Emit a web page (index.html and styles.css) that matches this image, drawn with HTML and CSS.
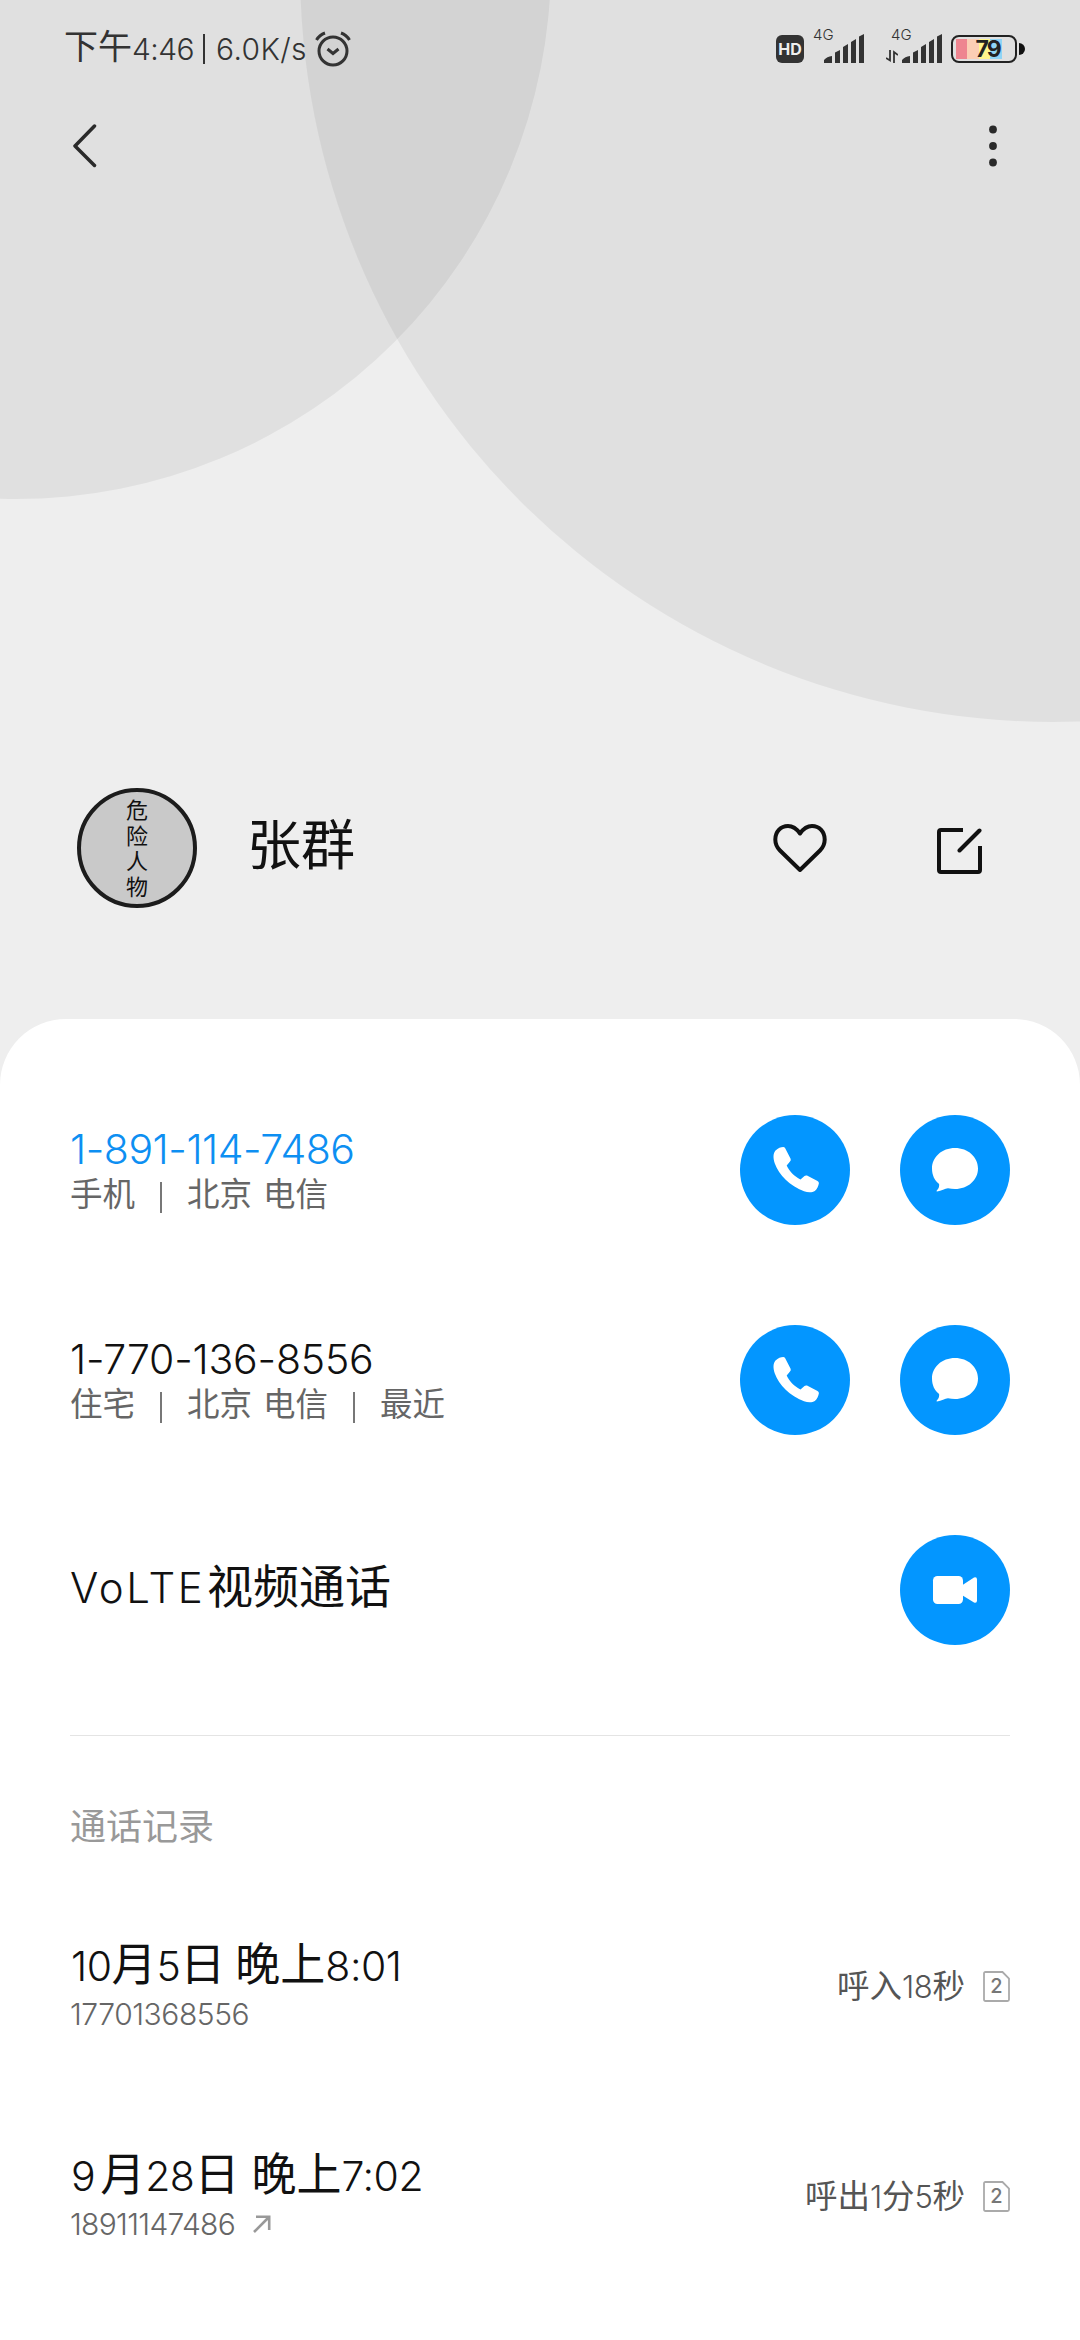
FILE: index.html
```html
<!DOCTYPE html>
<html lang="zh-CN">
<head>
<meta charset="utf-8">
<title>张群</title>
<link rel="stylesheet" href="styles.css">
</head>
<body>
<svg class="defs" width="0" height="0">
  <symbol id="phone" viewBox="0 0 110 110"><path fill="#fff" d="M35.500 35.500C38 33 41 32 43.200 32Q44.500 32 45.200 33.300L50.600 43.800Q51.300 45.300 50 46.500L46.700 50.500C49 56 54.500 61.500 60.500 64.500L64.500 61Q65.600 60 67 60.600L77.500 66Q79 66.900 78.900 68.200C78.500 71 77 74 74.800 76C72.500 77.600 68 77.700 64 76.300C50 71 39 60 34.800 48.500C33 43 33 38.500 35.500 35.500Z"/></symbol>
  <symbol id="bubble" viewBox="0 0 110 110"><path fill="#fff" d="M55 33C68 33 78 42 78 53.500C78 65 68 74 55 74Q51.500 74 48 73.200C45 73.500 41.500 76 37 76.500C36.300 76.500 36.400 76 37 75.300C39 73 39.300 71.500 39.100 69C34.500 65.500 32 60 32 53.500C32 42 42 33 55 33Z"/></symbol>
  <symbol id="sim" viewBox="0 0 27 31"><path fill="none" stroke="#aaa" stroke-width="1.800" d="M2.500 1H19.500L26 7.500V28.500Q26 30 24.500 30H2.500Q1 30 1 28.500V2.500Q1 1 2.500 1Z"/></symbol>
  <symbol id="bars" viewBox="0 0 40 29"><path fill="#333" d="M0 29V26Q3 22.500 8 22V29ZM11 29V18.500L16 16V29ZM19 29V13L24 10V29ZM27 29V8L32 5V29ZM35 29V2.500L40 0V29Z"/></symbol>
</svg>

<header class="hero">
  <svg class="backdrop" viewBox="0 0 1080 1100" width="1080" height="1100">
    <g fill="#000" fill-opacity=".055"><circle cx="16" cy="-36" r="535"/><circle cx="1053" cy="-31" r="753"/></g>
  </svg>
  <div class="status">
    <span class="clock"><span class="ampm">下午</span><span class="time">4:46</span></span>
    <span class="sep"></span>
    <span class="speed">6.0K/s</span>
    <svg class="alarm" width="36" height="36" viewBox="0 0 36 36" fill="none" stroke="#333" stroke-width="3"><circle cx="18" cy="20" r="14"/><path d="M1.500 9Q4.500 4 10 2M34.500 9Q31.500 4 26 2M12.500 18L18 22.500L23.500 18"/></svg>
    <span class="grow"></span>
    <span class="hd">HD</span>
    <span class="signal first"><span class="net">4G</span><svg width="40" height="29"><use href="#bars"/></svg></span>
    <span class="signal"><span class="net">4G</span><svg class="data" width="12" height="13" viewBox="0 0 12 13"><path fill="none" stroke="#333" stroke-width="1.800" d="M4 0V10.500L0 8M8 13V2L12 5"/></svg><svg width="40" height="29"><use href="#bars"/></svg></span>
    <span class="battery"><span class="level">79</span></span><span class="tip"></span>
  </div>
  <nav class="toolbar">
    <svg width="24" height="44" viewBox="0 0 24 44" fill="none" stroke="#2a2a2a" stroke-width="3.500" stroke-linecap="round" stroke-linejoin="round"><path d="M21.500 2L2 22L21.500 41.500"/></svg>
    <svg width="8" height="42" viewBox="0 0 8 42" fill="#2a2a2a"><circle cx="4" cy="4.500" r="3.900"/><circle cx="4" cy="21" r="3.900"/><circle cx="4" cy="37.500" r="3.900"/></svg>
  </nav>
  <div class="profile">
    <div class="avatar">危险人物</div>
    <h1 class="name">张群</h1>
    <svg class="heart" width="54" height="48" viewBox="0 0 54 48" fill="none" stroke="#111" stroke-width="4" stroke-linejoin="round"><path d="M27 9.500C23.500 4.500 19.500 2 15 2C7.500 2 2.300 8 2.300 15.500C2.300 20 4 23.500 7 26.500L27 46L47 26.500C50 23.500 51.700 20 51.700 15.500C51.700 8 46.500 2 39 2C34.500 2 30.500 4.500 27 9.500Z"/></svg>
    <svg class="edit" width="46" height="46" viewBox="0 0 46 46" fill="none" stroke="#111" stroke-width="4"><path d="M26 2H4Q2 2 2 4V42Q2 44 4 44H41Q43 44 43 42V18"/><path stroke-linecap="round" d="M22.500 22.500L42.500 2.500"/></svg>
  </div>
</header>

<main class="card">
  <section class="row">
    <div class="info">
      <div class="number blue n1">1-891-114-7486</div>
      <div class="meta"><span>手机</span><i></i><span>北京</span><span class="isp">电信</span></div>
    </div>
    <div class="actions"><svg class="btn"><use href="#phone"/></svg><svg class="btn"><use href="#bubble"/></svg></div>
  </section>
  <section class="row">
    <div class="info">
      <div class="number n2">1-770-136-8556</div>
      <div class="meta"><span>住宅</span><i></i><span>北京</span><span class="isp">电信</span><i></i><span>最近</span></div>
    </div>
    <div class="actions"><svg class="btn"><use href="#phone"/></svg><svg class="btn"><use href="#bubble"/></svg></div>
  </section>
  <section class="row">
    <div class="volte"><span class="latin">VoLTE</span><span>视频通话</span></div>
    <div class="actions"><svg class="btn" viewBox="0 0 110 110"><rect x="33" y="41" width="30" height="28" rx="4.500" fill="#fff"/><path fill="#fff" d="M61 51L74 42.500Q77 41.500 77 44.500V65.500Q77 68.500 74 67.500L61 59.500Z"/></svg></div>
  </section>
  <hr class="rule">
  <h2 class="heading">通话记录</h2>
  <section class="row log">
    <div class="info">
      <div class="when w1">10<b class="yue">月</b>5<b>日</b><b class="wan">晚上</b>8:01</div>
      <div class="sub s1">17701368556</div>
    </div>
    <div class="duration"><span>呼入<em>18</em>秒</span><div class="sim"><svg width="27" height="31"><use href="#sim"/></svg><span>2</span></div></div>
  </section>
  <section class="row log">
    <div class="info">
      <div class="when w2">9<b class="yue">月</b>28<b>日</b><b class="wan">晚上</b>7:02</div>
      <div class="sub s2">18911147486<svg class="out" width="18" height="18" viewBox="0 0 18 18" fill="none" stroke="#999" stroke-width="2.600"><path d="M1 17L15.500 2.500M3 1.800H16.200V15"/></svg></div>
    </div>
    <div class="duration"><span>呼出<em>1</em>分<em>5</em>秒</span><div class="sim"><svg width="27" height="31"><use href="#sim"/></svg><span>2</span></div></div>
  </section>
</main>
</body>
</html>
```
FILE: styles.css
```css
* { box-sizing: border-box; }
body {
  margin: 0;
  width: 1080px;
  height: 2340px;
  overflow: hidden;
  background: #eee;
  color: #111;
  font-family: Inter, "Noto Sans CJK SC", sans-serif;
  font-weight: 300;
}
svg { display: block; flex: none; }
.defs { position: absolute; }
h1, h2 { margin: 0; font-weight: inherit; }
b { font-weight: 400; }
em { font-style: normal; font-weight: 300; }

.hero { position: relative; height: 1019px; }
.backdrop { position: absolute; inset: 0; z-index: -1; }

.status {
  display: flex;
  align-items: center;
  height: 98px;
  padding: 0 55px 0 64px;
  color: #333;
  font-size: 30px;
  white-space: nowrap;
}
.clock { display: flex; align-items: center; width: 136px; letter-spacing: -.6px; }
.ampm { margin-top: -4px; font-size: 34px; font-weight: 400; line-height: 50px; letter-spacing: 0; }
.sep { width: 2px; height: 30px; margin: 0 11px 0 3px; background: #333; }
.speed { width: 91px; letter-spacing: .4px; }
.alarm { margin-left: 8px; }
.grow { flex: 1; }
.hd {
  width: 28px;
  height: 28px;
  margin-right: 9px;
  margin-top: -1px;
  border-radius: 6px;
  background: #333;
  color: #eee;
  font-size: 16px;
  font-weight: 700;
  line-height: 28px;
  text-align: center;
}
.signal {
  position: relative;
  display: flex;
  align-items: flex-end;
  justify-content: flex-end;
  width: 57px;
  height: 44px;
  margin-top: -17px;
  padding-top: 15px;
}
.signal.first { width: 51px; margin-right: 21px; }
.signal .data { margin-right: 4px; }
.net { position: absolute; left: 0; top: 6px; font-size: 15px; line-height: 20px; }
.signal:not(.first) .net { left: 6px; }
.battery {
  width: 66px;
  height: 28px;
  margin-left: 9px;
  margin-top: -1px;
  padding: 2px;
  border: 2px solid #222;
  border-radius: 8px;
}
.level {
  display: block;
  width: 46px;
  height: 20px;
  margin-left: 1px;
  padding-right: 2px;
  background: linear-gradient(90deg, #ee8590 0 11px, #fbceb5 11px 23px, #fff58c 23px 34px, #8fd4f5 34px);
  color: #222;
  font-size: 23px;
  font-weight: 700;
  line-height: 20px;
  text-align: right;
  letter-spacing: -1.800px;
}
.tip { width: 6px; height: 12px; margin-left: 2px; border-radius: 0 6px 6px 0; background: #111; }

.toolbar {
  display: flex;
  align-items: center;
  justify-content: space-between;
  height: 96px;
  padding: 0 83px 0 73px;
}
.profile {
  display: flex;
  align-items: center;
  height: 120px;
  margin-top: 594px;
  padding: 0 97px 0 77px;
}
.avatar {
  display: flex;
  align-items: center;
  justify-content: center;
  width: 120px;
  height: 120px;
  padding-top: 3px;
  border: 4px solid #1c1c1c;
  border-radius: 50%;
  background: #c9c9c9;
  font-family: "Noto Sans CJK SC", sans-serif;
  font-weight: 400;
  font-size: 22px;
  letter-spacing: 3.400px;
  line-height: 24px;
  writing-mode: vertical-rl;
}
.name { flex: 1; margin: -4px 0 0 50px; font-size: 54px; font-weight: 400; line-height: 60px; }
.heart { margin-right: 110px; }
.edit { margin-top: 5px; }

.card {
  height: 1321px;
  padding: 96px 70px 0;
  border-radius: 66px 66px 0 0;
  background: #fff;
}
.row { display: flex; justify-content: space-between; height: 110px; margin-bottom: 100px; }
.number { height: 55px; padding-top: 7px; font-size: 41px; line-height: 54px; white-space: nowrap; }
.blue { color: #0d8ff2; }
.n1 { letter-spacing: -.450px; }
.n2 { letter-spacing: -.200px; }
.meta { display: flex; align-items: center; height: 50px; color: #666; font-size: 32.500px; font-weight: 400; line-height: 50px; }
.meta i { width: 2px; height: 31px; margin: 4px 25px 0; background: #777; }
.isp { margin-left: 11px; }
.actions { display: flex; gap: 50px; }
.btn { width: 110px; height: 110px; border-radius: 50%; background: #0396ff; }
.volte { display: flex; align-items: center; height: 102px; font-size: 46px; font-weight: 400; line-height: 60px; white-space: nowrap; }
.volte span { margin-top: 0; }
.volte .latin { width: 137px; margin-top: 3px; font-size: 42px; font-weight: 300; letter-spacing: 2.600px; }
.rule { height: 1px; margin: -10px 0 1px; border: 0; background: #e4e4e4; }
.heading { height: 36px; margin-top: 73px; color: #999; font-size: 36px; font-weight: 400; line-height: 36px; }
.log { margin: 82px 0 0; height: 128px; }
.when { height: 70px; padding-left: 1px; padding-top: 3px; font-size: 41px; line-height: 70px; white-space: nowrap; letter-spacing: -.5px; }
.when b { font-size: 45px; letter-spacing: 0; }
.wan { margin-left: 10px; }
.w2 .yue { margin-left: 5px; }
.w2 .wan { margin-left: 12px; }
.sub { display: flex; align-items: center; height: 34px; color: #666; font-size: 30px; line-height: 34px; letter-spacing: -.450px; }
.s2 { letter-spacing: -.700px; }
.out { margin-left: 18px; }
.duration { display: flex; align-items: center; height: 113px; gap: 18px; color: #555; font-size: 32.500px; font-weight: 400; white-space: nowrap; }
.duration em { font-size: 31px; letter-spacing: -.3px; }
.sim { display: grid; width: 27px; height: 31px; margin-top: 5px; color: #777; }
.sim > * { grid-area: 1 / 1; }
.sim span { font-size: 20px; font-weight: 500; line-height: 31px; text-align: center; }
```
